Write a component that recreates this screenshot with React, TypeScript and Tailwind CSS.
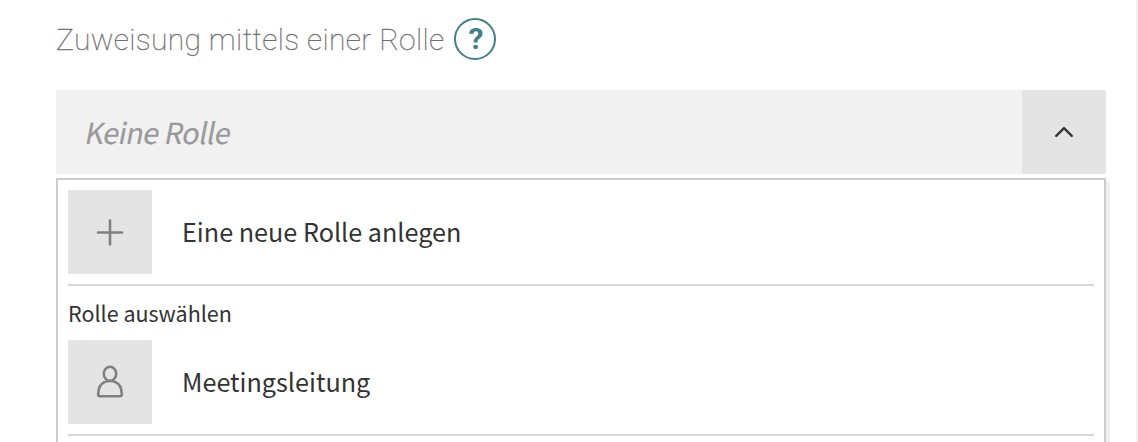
import React from "react";

function PlusIcon() {
  return (
    <svg width="28" height="28" viewBox="0 0 28 28" fill="none" stroke="#808080" strokeWidth="2.6" strokeLinecap="round">
      <path d="M14 2.6v23.8M2 14.5h24" />
    </svg>
  );
}

function PersonIcon() {
  return (
    <svg width="28" height="34" viewBox="0 0 28 34" fill="none" stroke="#808080" strokeWidth="2.6" strokeLinejoin="round">
      <ellipse cx="14" cy="8.8" rx="6.2" ry="7" />
      <path d="M8.8 17C4.4 18.8 2.2 23.5 2.2 29.3Q2.2 31.3 4.2 31.3H23.8Q25.8 31.3 25.8 29.3C25.8 23.5 23.6 18.8 19.2 17C16.8 15.6 11.2 15.6 8.8 17" />
    </svg>
  );
}

function Option({ icon, label }: { icon: React.ReactNode; label: string }) {
  return (
    <div className="flex h-24 items-start border-b-2 border-[#d8d8d8]">
      <div className="flex size-[84px] shrink-0 items-center justify-center bg-[#e4e4e4]">{icon}</div>
      <div className="flex h-[84px] items-center pl-[30px] text-[25.2px] leading-none">
        <span className="whitespace-nowrap">{label}</span>
      </div>
    </div>
  );
}

export default function App() {
  return (
    <div className="h-[442px] w-[1138px] overflow-hidden border-r-2 border-[#f1f1f1] bg-white pr-[30px] pl-14 font-['Noto_Sans_CJK_SC',sans-serif] text-[#333333] antialiased">
      <div className="flex h-[90px] items-start pt-[18px]">
        <h1 className="w-[398px] pt-px font-['Roboto',sans-serif] text-[30px] leading-[42px] font-thin tracking-[0.34px] whitespace-nowrap text-[#707070] [-webkit-text-stroke:0.3px]">
          Zuweisung mittels einer Rolle
        </h1>
        <div className="flex size-[42px] items-center justify-center rounded-full border-2 border-[#3f8185] pl-0.5 font-['Roboto',sans-serif] text-[30px] leading-none font-bold text-[#3f8185]">
          ?
        </div>
      </div>
      <div className="flex h-[84px] bg-[#f1f1f1]">
        <div className="flex flex-1 items-center pl-[30px] text-[28.8px] leading-none tracking-[-0.45px] text-[#999999] [-webkit-text-stroke:0.15px]">
          <span className="inline-block -skew-x-[11deg]">Keine Rolle</span>
        </div>
        <div className="flex size-[84px] items-center justify-center bg-[#e4e4e4]">
          <svg width="20" height="12" viewBox="0 0 20 12" fill="none" stroke="#333333" strokeWidth="2.4" strokeLinecap="round" strokeLinejoin="miter">
            <path d="M2.2 9.8 10 2.2 17.8 9.8" />
          </svg>
        </div>
      </div>
      <div className="mt-1 h-[300px] border-2 border-[#cccccc] bg-white p-[10px] shadow-[4px_4px_0_0_#f0f0f0]">
        <Option icon={<PlusIcon />} label="Eine neue Rolle anlegen" />
        <div className="flex h-[54px] items-center text-[21.5px] leading-none">Rolle auswählen</div>
        <Option icon={<PersonIcon />} label="Meetingsleitung" />
      </div>
    </div>
  );
}
